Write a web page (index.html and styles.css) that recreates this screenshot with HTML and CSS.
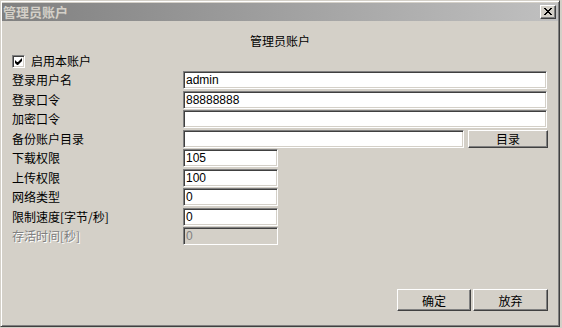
FILE: index.html
```html
<!DOCTYPE html>
<html lang="zh-CN">
<head>
    <meta charset="UTF-8">
    <title>管理员账户</title>
    <link rel="stylesheet" href="styles.css">
</head>
<body>
    <div class="window">
        <div class="titlebar">
            <span class="title">管理员账户</span>
            <button class="close" type="button">
                <svg width="8" height="7" viewBox="0 0 8 7">
                    <path d="M0 0h2v1h1v1h2v-1h1v-1h2v1h-1v1h-1v1h-1v1h1v1h1v1h1v1h-2v-1h-1v-1h-2v1h-1v1h-2v-1h1v-1h1v-1h1v-1h-1v-1h-1v-1h-1z" fill="#000"/>
                </svg>
            </button>
        </div>
        <div class="content">
            <h2 class="heading">管理员账户</h2>
            <label class="check">
                <span class="box">
                    <svg width="9" height="9" viewBox="0 0 9 9">
                        <path d="M1 3v3l2 2h1l4-4v-3l-4 4h-1z" fill="#000"/>
                    </svg>
                </span>
                启用本账户
            </label>
            <div class="form">
                <span class="label">登录用户名</span>
                <input class="field" type="text" value="admin">

                <span class="label">登录口令</span>
                <input class="field" type="text" value="88888888">

                <span class="label">加密口令</span>
                <input class="field" type="text" value="">

                <span class="label">备份账户目录</span>
                <div class="with-button">
                    <input class="field" type="text" value="">
                    <button class="btn btn-dir" type="button">目录</button>
                </div>

                <span class="label">下载权限</span>
                <input class="field short" type="text" value="105">

                <span class="label">上传权限</span>
                <input class="field short" type="text" value="100">

                <span class="label">网络类型</span>
                <input class="field short" type="text" value="0">

                <span class="label">限制速度[字节/秒]</span>
                <input class="field short" type="text" value="0">

                <span class="label disabled">存活时间[秒]</span>
                <input class="field short" type="text" value="0" disabled>
            </div>
            <div class="actions">
                <button class="btn btn-ok" type="button">确定</button>
                <button class="btn btn-cancel" type="button">放弃</button>
            </div>
        </div>
    </div>
</body>
</html>
```

FILE: styles.css
```css
/* Basic reset */
* {
    margin: 0;
    padding: 0;
    box-sizing: border-box;
}

body {
    width: 562px;
    height: 328px;
    background-color: #d4d0c8;
    font-family: "Liberation Sans", "Noto Sans CJK SC", sans-serif;
    font-size: 12px;
    color: #000;
    overflow: hidden;
}

/* Dialog frame */
.window {
    width: 560px;
    height: 327px;
    padding: 1px;
    background-color: #d4d0c8;
    border-top: 1px solid #d4d0c8;
    border-left: 1px solid #d4d0c8;
    border-right: 1px solid #404040;
    border-bottom: 1px solid #404040;
    box-shadow: inset 1px 1px 0 #fff, inset -1px -1px 0 #808080;
    display: flex;
    flex-direction: column;
}

/* Title bar */
.titlebar {
    height: 18px;
    margin-top: 1px;
    background: linear-gradient(to right, #808080, #c0c0c0);
    display: flex;
    align-items: center;
    justify-content: space-between;
    padding: 0 2px 0 1px;
}

.titlebar .title {
    font-family: "Noto Sans CJK SC", sans-serif;
    font-size: 13px;
    font-weight: bold;
    color: #d4d0c8;
    line-height: 18px;
}

.close {
    width: 16px;
    height: 14px;
    background-color: #d4d0c8;
    border-top: 1px solid #fff;
    border-left: 1px solid #fff;
    border-right: 1px solid #404040;
    border-bottom: 1px solid #404040;
    box-shadow: inset -1px -1px 0 #808080;
    display: flex;
    align-items: center;
    justify-content: center;
    padding-bottom: 1px;
}

.close svg {
    display: block;
}

/* Content */
.content {
    flex: 1;
    display: flex;
    flex-direction: column;
    padding: 12px 10px 0 10px;
}

.heading {
    font-family: "Noto Sans CJK SC", sans-serif;
    font-size: 12px;
    font-weight: normal;
    line-height: 16px;
    text-align: center;
}

.check {
    display: flex;
    align-items: center;
    gap: 6px;
    height: 14px;
    margin-top: 5px;
    font-family: "Noto Sans CJK SC", sans-serif;
    line-height: 14px;
}

.check .box {
    width: 13px;
    height: 13px;
    background-color: #fff;
    border-top: 1px solid #808080;
    border-left: 1px solid #808080;
    border-right: 1px solid #fff;
    border-bottom: 1px solid #fff;
    box-shadow: inset 1px 1px 0 #404040, inset -1px -1px 0 #d4d0c8;
    display: flex;
    align-items: center;
    justify-content: center;
}

.check .box svg {
    display: block;
}

/* Form rows */
.form {
    display: grid;
    grid-template-columns: 171px 1fr;
    grid-auto-rows: 18px;
    row-gap: 1.5px;
    margin-top: 3px;
}

.label {
    font-family: "Noto Sans CJK SC", sans-serif;
    line-height: 18px;
    white-space: nowrap;
}

.label.disabled {
    color: #808080;
    text-shadow: 1px 1px 0 #fff;
}

.field {
    width: 364px;
    height: 18px;
    font-family: "Liberation Sans", "Noto Sans CJK SC", sans-serif;
    font-size: 12px;
    color: #000;
    background-color: #fff;
    padding: 0 2px;
    border-top: 1px solid #808080;
    border-left: 1px solid #808080;
    border-right: 1px solid #fff;
    border-bottom: 1px solid #fff;
    box-shadow: inset 1px 1px 0 #404040, inset -1px -1px 0 #d4d0c8;
    outline: none;
}

.field.short {
    width: 95px;
}

.field:disabled {
    background-color: #d4d0c8;
    color: #808080;
}

.with-button {
    display: flex;
    gap: 4px;
}

.with-button .field {
    width: 281px;
}

/* Buttons */
.btn {
    font-family: "Noto Sans CJK SC", sans-serif;
    font-size: 12px;
    color: #000;
    background-color: #d4d0c8;
    border-top: 1px solid #fff;
    border-left: 1px solid #fff;
    border-right: 1px solid #404040;
    border-bottom: 1px solid #404040;
    box-shadow: inset -1px -1px 0 #808080;
    cursor: pointer;
}

.btn-dir {
    width: 80px;
    height: 18px;
    line-height: 14px;
}

.actions {
    display: flex;
    justify-content: flex-end;
    gap: 2px;
    margin-top: 44px;
}

.btn-ok {
    width: 74px;
    height: 22px;
}

.btn-cancel {
    width: 75px;
    height: 22px;
}
```
